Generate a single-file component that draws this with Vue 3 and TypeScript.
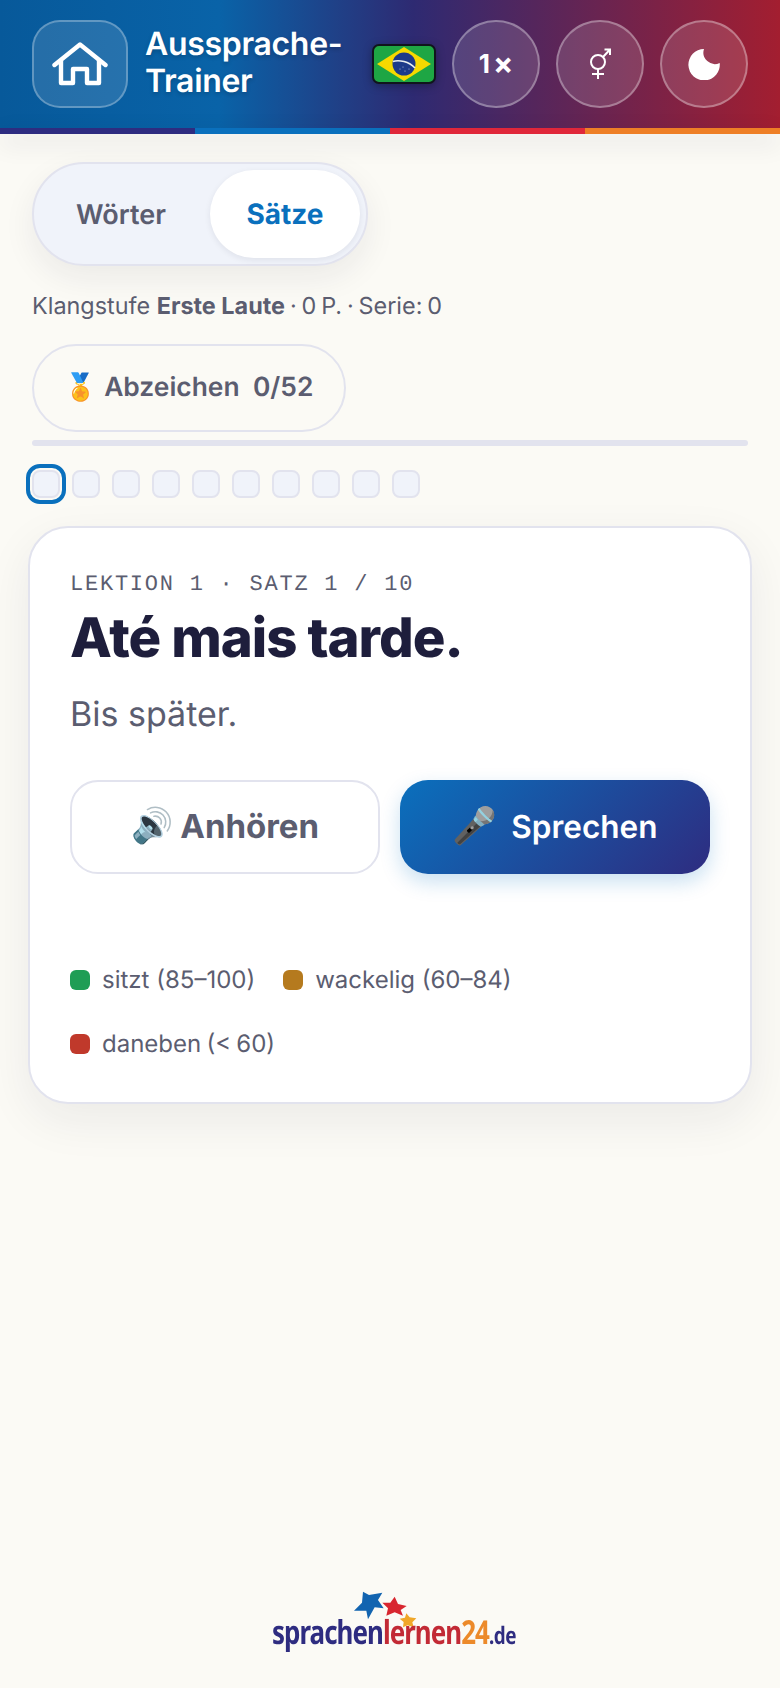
<script setup lang="ts">
const dots: number[] = Array.from({ length: 10 }, (_, i) => i);
</script>

<template>
  <div class="page">
    <header class="top">
      <button class="home" aria-label="Start">
        <svg viewBox="0 0 56 44" width="56" height="44" fill="none" stroke="#fff" stroke-width="4.400" stroke-linecap="round" stroke-linejoin="round">
          <path d="M2.500 23 L28 2.500 L53.500 23" />
          <path d="M9 19 V41 H21 V27 H35 V41 H47 V19" />
        </svg>
      </button>
      <h1 class="title">Aussprache-<br />Trainer</h1>
      <svg class="flag" viewBox="0 0 64 40" width="64" height="40">
        <rect x="1" y="1" width="62" height="38" rx="6" fill="#1ea644" stroke="#10151c" stroke-width="2" />
        <path d="M5 20 L32 3 L59 20 L32 37 Z" fill="#f7d900" />
        <circle cx="32" cy="20" r="11.500" fill="#1d3a8a" />
        <path d="M20.800 17.500 C27 15.500 37 17.500 43 24" fill="none" stroke="#e9eef0" stroke-width="1.600" />
        <g fill="#cfd8ea"><circle cx="28" cy="25" r=".5" /><circle cx="33" cy="27" r=".5" /><circle cx="37" cy="25" r=".5" /><circle cx="31" cy="23" r=".5" /></g>
      </svg>
      <button class="circle speed">1<span class="times">×</span></button>
      <button class="circle" aria-label="Stimme">
        <svg viewBox="0 0 24 32" width="24" height="32" fill="none" stroke="#fff" stroke-width="2">
          <circle cx="10" cy="14" r="7" />
          <path d="M10 21 V31 M4 26 H16 M15 9 L22 1.500 M16.500 1.500 H22 V7" />
        </svg>
      </button>
      <button class="circle" aria-label="Dunkel">
        <svg viewBox="0 0 32 32" width="32" height="32"><path d="M16 1 A15.700 15.700 0 1 0 31.700 15 A11.500 11.500 0 0 1 16 1 Z" fill="#fff" /></svg>
      </button>
    </header>
    <div class="stripe"><i class="s1"></i><i class="s2"></i><i class="s3"></i><i class="s4"></i></div>

    <main class="main">
      <div class="toggle">
        <button class="tab">Wörter</button>
        <button class="tab active">Sätze</button>
      </div>
      <p class="status">Klangstufe <b>Erste Laute</b><span class="tail"> · 0 P. · Serie: 0</span></p>
      <button class="badges"><span class="emoji">🏅</span> Abzeichen&nbsp; 0/52</button>
      <div class="progress"></div>
      <div class="dots">
        <span v-for="d in dots" :key="d" class="dot" :class="{ current: d === 0 }"></span>
      </div>

      <section class="card">
        <div class="eyebrow">LEKTION 1 · SATZ 1 / 10</div>
        <h2 class="phrase">Até mais tarde.</h2>
        <p class="meaning">Bis später.</p>
        <div class="actions">
          <button class="btn listen"><span class="emoji">🔊</span><span>Anhören</span></button>
          <button class="btn speak"><span class="emoji">🎤</span><span>Sprechen</span></button>
        </div>
        <ul class="legend">
          <li><i class="sw green"></i>sitzt (85–100)</li>
          <li><i class="sw amber"></i>wackelig (60–84)</li>
          <li><i class="sw red"></i>daneben (&lt; 60)</li>
        </ul>
      </section>
    </main>

    <footer class="foot">
      <div class="logo">
        <svg class="stars" viewBox="320 30 200 120" width="66.670" height="40">
          <path d="M350 35 L368 45 L408 38 L395 60 L412 85 L385 82 L365 118 L360 92 L323 92 L347 68 Z" fill="#1264b0" />
          <path d="M445 50 L455 72 L481 78 L463 90 L470 107 L445 97 L420 107 L425 85 L408 68 L432 68 Z" fill="#d8262f" />
          <path d="M480 100 L490 112 L510 115 L498 127 L502 142 L484 136 L470 142 L472 126 L460 116 L476 113 Z" fill="#f0a728" />
        </svg>
        <div class="wordmark"><span class="w1">sprachen</span><span class="w2">lernen</span><span class="w3">24</span><span class="w4">.de</span></div>
      </div>
    </footer>
  </div>
</template>

<style scoped>
.page {
  height: 1688px;
  overflow: hidden;
  display: flex;
  flex-direction: column;
  background: #fbfaf5;
  font-family: Inter, "Noto Sans", sans-serif;
  color: #5b5d70;
  text-rendering: geometricPrecision;
}
button { font-family: inherit; cursor: pointer; text-rendering: geometricPrecision; }
.top {
  height: 128px;
  box-sizing: border-box;
  display: flex;
  align-items: center;
  gap: 16px;
  padding: 0 32px;
  background: linear-gradient(90deg, #07599a 0%, #0963a8 28%, #2e2a72 53%, #a31e30 100%);
}
.home {
  width: 96px;
  height: 88px;
  flex: none;
  box-sizing: border-box;
  border-radius: 28px;
  border: 2px solid rgba(255, 255, 255, 0.28);
  background: rgba(255, 255, 255, 0.12);
  display: flex;
  align-items: center;
  justify-content: center;
  padding: 0;
}
.title {
  flex: 1;
  margin: 0 0 4px 1px;
  font-size: 32px;
  line-height: 37px;
  font-weight: 600;
  letter-spacing: -0.32px;
  color: #fff;
  text-shadow: 0 2px 4px rgba(0, 0, 0, 0.2);
  white-space: nowrap;
}
.flag {
  flex: none;
  filter: drop-shadow(0 2px 4px rgba(0, 0, 0, 0.3));
}
.circle {
  width: 88px;
  height: 88px;
  flex: none;
  box-sizing: border-box;
  border-radius: 50%;
  border: 2px solid rgba(255, 255, 255, 0.32);
  background: rgba(255, 255, 255, 0.13);
  color: #fff;
  display: flex;
  align-items: center;
  justify-content: center;
  padding: 0;
}
.speed { font-size: 26px; font-weight: 700; }
.times { font-size: 30px; margin-left: 3px; line-height: 26px; }
.stripe { display: flex; height: 6px; box-shadow: 0 8px 24px rgba(30, 30, 50, 0.16); }
.stripe i { flex: 1; }
.s1 { background: #2e2c80; }
.s2 { background: #0a70bd; }
.s3 { background: #e0273a; }
.s4 { background: #ee7f26; }

.main { padding: 28px 32px 0; display: flex; flex-direction: column; align-items: flex-start; }
.toggle {
  display: flex;
  gap: 8px;
  box-sizing: border-box;
  height: 104px;
  padding: 6px;
  border: 2px solid #e2e3ee;
  border-radius: 52px;
  background: #f0f3fa;
  box-shadow: 0 12px 32px rgba(30, 30, 50, 0.07);
}
.tab {
  border: 0;
  background: transparent;
  width: 150px;
  height: 88px;
  font-size: 27px;
  font-weight: 600;
  color: #5b5d70;
  border-radius: 44px;
  padding: 0;
}
.tab:first-child { width: 162px; }
.tab.active {
  background: #fff;
  color: #0a70bd;
  font-size: 28px;
  font-weight: 700;
  box-shadow: 0 2px 6px rgba(30, 30, 50, 0.08);
}
.status { margin: 22px 0 0; font-size: 23.400px; line-height: 36px; color: #5b5d70; }
.status b { font-weight: 700; }
.tail { word-spacing: -1.700px; }
.badges {
  margin-top: 20px;
  box-sizing: border-box;
  width: 314px;
  height: 88px;
  border: 2px solid #e2e3ee;
  border-radius: 44px;
  background: transparent;
  font-size: 26.400px;
  line-height: 30px;
  font-weight: 600;
  color: #5b5d70;
  padding: 0 0 2px;
}
.emoji { font-family: "Noto Color Emoji", sans-serif; }
.progress { width: 716px; height: 6px; margin-top: 8px; background: #e2e3ee; border-radius: 3px; }
.dots { display: flex; gap: 12px; margin-top: 24px; }
.dot {
  width: 28px;
  height: 28px;
  box-sizing: border-box;
  border: 2px solid #e2e3ee;
  background: #f0f3fa;
  border-radius: 8px;
}
.dot.current { outline: 4px solid #0a70bd; outline-offset: 2px; }

.card {
  align-self: center;
  box-sizing: border-box;
  width: 724px;
  margin-top: 28px;
  height: 578px;
  padding: 42px 40px 0;
  background: #fff;
  border: 2px solid #e2e3ee;
  border-radius: 40px;
  box-shadow: 0 16px 48px rgba(30, 30, 50, 0.07);
}
.eyebrow {
  font-family: "Liberation Mono", monospace;
  font-size: 22px;
  letter-spacing: 1.760px;
  line-height: 30px;
  color: #5b5d70;
}
.phrase {
  margin: 3px 0 0;
  font-size: 54.500px;
  line-height: 70px;
  font-weight: 800;
  letter-spacing: -1px;
  color: #1e1e3c;
}
.meaning { margin: 19px 0 0; font-size: 34px; line-height: 46px; color: #5b5d70; }
.actions { display: grid; grid-template-columns: 1fr 1fr; gap: 20px; margin-top: 42px; }
.btn {
  height: 94px;
  border-radius: 28px;
  padding: 0 0 2px;
  box-sizing: border-box;
  display: flex;
  align-items: center;
  justify-content: center;
}
.btn .emoji { font-size: 34px; }
.listen { background: #fff; border: 2px solid #e2e3ee; color: #5b5d70; font-size: 33px; font-weight: 700; gap: 7px; }
.speak {
  border: 0;
  color: #fff;
  font-size: 31.500px;
  font-weight: 600;
  gap: 14px;
  background: linear-gradient(135deg, #0a70bd, #2e2c80);
  box-shadow: 0 8px 20px rgba(10, 112, 189, 0.22);
}
.speak .emoji { font-size: 36px; }
.legend {
  list-style: none;
  margin: 88px 0 0;
  padding: 0;
  display: flex;
  flex-wrap: wrap;
  gap: 28px;
  font-size: 24px;
  line-height: 36px;
}
.legend li { display: flex; align-items: center; gap: 12px; }
.legend li:nth-child(3) { flex-basis: 100%; word-spacing: -1.500px; }
.sw { width: 20px; height: 20px; border-radius: 6px; }
.green { background: #1f9d55; }
.amber { background: #b57a1e; }
.red { background: #c0392b; }

.foot { margin-top: auto; display: flex; justify-content: center; padding-bottom: 36px; }
.logo { position: relative; width: 241px; height: 60px; }
.stars { position: absolute; left: 83.670px; top: -2px; }
.wordmark {
  position: absolute;
  left: 2px;
  bottom: -2px;
  font-family: "Noto Sans", sans-serif;
  font-weight: 700;
  font-size: 33px;
  line-height: 36px;
  white-space: nowrap;
  letter-spacing: -1.200px;
  transform: scaleX(0.785);
  transform-origin: left center;
}
.w1 { color: #2e2c80; }
.w2 { color: #c22a35; }
.w3 { color: #ec8a2a; }
.w4 { color: #2e2c80; font-size: 24px; letter-spacing: -0.500px; }
</style>

<style>
html, body { margin: 0; background: #fbfaf5; }
</style>
